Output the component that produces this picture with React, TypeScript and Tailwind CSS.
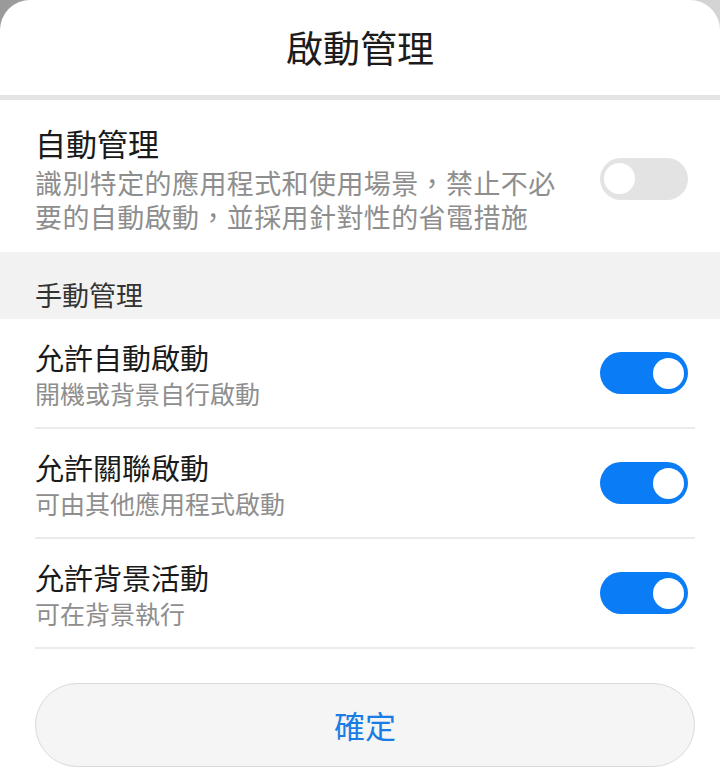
import { useState } from 'react';

type Row = { title: string; sub: string };

const rows: Row[] = [
  { title: '允許自動啟動', sub: '開機或背景自行啟動' },
  { title: '允許關聯啟動', sub: '可由其他應用程式啟動' },
  { title: '允許背景活動', sub: '可在背景執行' },
];

function Toggle({ on, onClick }: { on: boolean; onClick: () => void }) {
  return (
    <button
      onClick={onClick}
      className={`flex h-[42px] w-[88px] shrink-0 items-center rounded-full px-[4px] ${
        on ? 'justify-end bg-[#0a7cf5]' : 'justify-start bg-[#e3e3e3]'
      }`}
    >
      <span className="block h-[31px] w-[31px] rounded-full bg-white" />
    </button>
  );
}

export default function App() {
  const [auto, setAuto] = useState(false);
  const [manual, setManual] = useState([true, true, true]);

  return (
    <div
      className="h-[772px] w-[720px] overflow-hidden bg-gradient-to-r from-[#9a9a9a] to-[#d4d4d4]"
      style={{ fontFamily: '"Noto Sans CJK TC", "Noto Sans", sans-serif' }}
    >
      <div className="flex h-full flex-col rounded-t-[30px] bg-white">
        {/* Header */}
        <div className="flex h-[95px] items-center justify-center pb-[2px]">
          <h1 className="text-[37px] leading-[44px] text-[#1c1c1c]">啟動管理</h1>
        </div>
        <div className="h-[5px] bg-[#e4e4e4]" />

        {/* Auto */}
        <div className="flex h-[152px] items-center justify-between pl-[35px] pr-[32px] pt-[5px]">
          <div className="flex flex-col">
            <div className="text-[31px] leading-[40px] text-[#1a1a1a]">自動管理</div>
            <div className="mt-[3px] text-[27px] leading-[34px] tracking-[0.4px] text-[#8e8e8e]">
              識別特定的應用程式和使用場景，禁止不必
              <br />
              要的自動啟動，並採用針對性的省電措施
            </div>
          </div>
          <Toggle on={auto} onClick={() => setAuto(!auto)} />
        </div>

        {/* Section header */}
        <div className="h-[67px] bg-[#f2f2f2] pl-[35px] pt-[26px] text-[27px] leading-[34px] text-[#333333]">
          手動管理
        </div>

        {/* Manual rows */}
        <div className="ml-[35px] mr-[25px] flex flex-col">
          {rows.map((r, i) => (
            <div
              key={r.title}
              className="flex h-[110px] items-center justify-between border-b-[2px] border-[#ebebeb] pr-[7px]"
            >
              <div className="flex flex-col pt-[2px]">
                <div className="text-[29px] leading-[36px] text-[#1a1a1a]">{r.title}</div>
                <div className="mt-[2px] text-[25px] leading-[32px] text-[#8e8e8e]">{r.sub}</div>
              </div>
              <Toggle
                on={manual[i]}
                onClick={() => setManual(manual.map((v, j) => (j === i ? !v : v)))}
              />
            </div>
          ))}
        </div>

        {/* Confirm */}
        <div className="ml-[35px] mr-[25px] mt-[34px]">
          <button className="flex h-[84px] w-full items-center justify-center rounded-full border border-[#dadada] bg-[#f5f5f5] text-[31px] leading-[40px] text-[#1a7de3]">
            確定
          </button>
        </div>
      </div>
    </div>
  );
}
